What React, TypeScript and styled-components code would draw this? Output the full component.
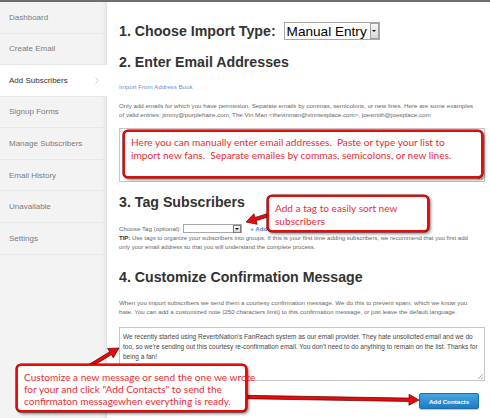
import styled, { createGlobalStyle } from 'styled-components';

const Global = createGlobalStyle`
  html, body { margin: 0; padding: 0; background: #fff; }
  body { font-family: "Liberation Sans", Arial, sans-serif; }
  * { box-sizing: border-box; }
`;

const Page = styled.div`
  position: relative;
  width: 490px;
  height: 418px;
  padding-top: 2px;
  display: flex;
  overflow: hidden;
  &::before {
    content: '';
    position: absolute;
    left: 0; right: 0; top: 0;
    height: 2px;
    background: #6e6e6e;
    z-index: 5;
  }
`;

const Sidebar = styled.nav`
  width: 107px;
  flex-shrink: 0;
  background: #f3f3f3;
  border-right: 1px solid #e3e3e3;
  box-shadow: inset -5px 0 5px -4px rgba(0, 0, 0, 0.07);
`;

const NavItem = styled.div<{ $active?: boolean }>`
  height: 31.57px;
  display: flex;
  align-items: center;
  justify-content: space-between;
  padding: 0 8px 0 9px;
  border-bottom: 1px solid #e8e8e8;
  font-size: 8px;
  color: ${p => (p.$active ? '#333' : '#7b7b7b')};
  background: ${p => (p.$active ? '#fff' : 'transparent')};
  margin-right: ${p => (p.$active ? '-1px' : '0')};
`;

const Main = styled.main`
  flex: 1;
  padding: 20px 5px 0 12px;
  color: #333;
`;

const Row = styled.div`
  display: flex;
  align-items: center;
  gap: 8px;
  height: 18px;
`;

const Heading = styled.h2<{ $mt?: number }>`
  margin: ${p => p.$mt ?? 0}px 0 0;
  font-size: 14.2px;
  line-height: 16px;
  font-weight: bold;
  color: #333;
  white-space: nowrap;
`;

const Select = styled.div<{ $w: number; $h: number; $fs: number }>`
  width: ${p => p.$w}px;
  height: ${p => p.$h}px;
  border: 1px solid #a8a8a8;
  background: #fff;
  display: flex;
  align-items: center;
  justify-content: space-between;
  padding-left: 2px;
  font-size: ${p => p.$fs}px;
  color: #000;
  flex-shrink: 0;
  white-space: nowrap;
`;

const SelectBtn = styled.span<{ $w: number; $h: number; $dark?: boolean }>`
  width: ${p => p.$w}px;
  height: ${p => p.$h}px;
  flex-shrink: 0;
  border: 1px solid ${p => (p.$dark ? '#7d7d7d' : '#a0a0a0')};
  background: linear-gradient(#f8f8f8, #d6d6d6);
  display: flex;
  align-items: center;
  justify-content: center;
  &::after {
    content: '';
    border-left: 2px solid transparent;
    border-right: 2px solid transparent;
    border-top: 2px solid #111;
  }
`;

const Link = styled.a<{ $mt?: number }>`
  display: block;
  margin-top: ${p => p.$mt ?? 0}px;
  font-size: 6.2px;
  line-height: 8px;
  color: #6a8fd4;
  text-decoration: none;
`;

const Para = styled.p<{ $mt?: number; $fs?: number }>`
  margin: ${p => p.$mt ?? 0}px 0 0;
  font-size: ${p => p.$fs ?? 6.2}px;
  line-height: 9px;
  color: #666;
  white-space: nowrap;
  b { color: #333; }
`;

const TextBox = styled.div<{ $mt?: number }>`
  position: relative;
  margin-top: ${p => p.$mt ?? 0}px;
  height: 54px;
  border: 1px solid #c6c6c6;
  background: #fff;
  padding: 4px 3px;
  font-size: 6.5px;
  line-height: 10px;
  color: #444;
  white-space: nowrap;
  &::after {
    content: '';
    position: absolute;
    right: 1px;
    bottom: 1px;
    width: 5px;
    height: 5px;
    background: linear-gradient(135deg, transparent 45%, #aaa 45%, #aaa 55%, transparent 55%, transparent 75%, #aaa 75%, #aaa 85%, transparent 85%);
  }
`;

const TagRow = styled.div`
  margin-top: 14px;
  height: 9px;
  display: flex;
  align-items: center;
  font-size: 6.2px;
  color: #666;
  gap: 2px;
`;

const AddLink = styled.span`
  margin-left: 6px;
  color: #4b7fd0;
  font-weight: bold;
`;

const ButtonRow = styled.div`
  margin-top: 12px;
  display: flex;
  justify-content: flex-end;
  padding-right: 6px;
`;

const Button = styled.button`
  width: 60px;
  height: 16px;
  padding: 0;
  border: 1px solid #1d6eaa;
  border-radius: 2px;
  background: linear-gradient(#45a6e2, #1f7cc2);
  color: #fff;
  font-family: "Liberation Sans", Arial, sans-serif;
  font-weight: bold;
  font-size: 6.2px;
  box-shadow: 0 1px 1px rgba(0, 0, 0, 0.25);
`;

const Callout = styled.div<{ $x: number; $y: number; $w: number; $h: number; $pt: number; $lh: number }>`
  position: absolute;
  left: ${p => p.$x}px;
  top: ${p => p.$y}px;
  width: ${p => p.$w}px;
  height: ${p => p.$h}px;
  padding: ${p => p.$pt}px 0 0 6px;
  background: #fff;
  border: 2.5px solid #e80b0b;
  border-radius: 5px;
  box-shadow: 0 0 0 0.6px #6a0000, 2px 2px 3px rgba(0, 0, 0, 0.45);
  font-family: Lato, "Open Sans", sans-serif;
  font-size: 10.1px;
  line-height: ${p => p.$lh}px;
  color: #ec2b33;
  white-space: pre;
  z-index: 3;
`;

const Overlay = styled.svg`
  position: absolute;
  left: 0;
  top: 0;
  z-index: 2;
  pointer-events: none;
`;

function arrowPoints(x1: number, y1: number, x2: number, y2: number, t = 3.4, hl = 10, hw = 11) {
  const len = Math.hypot(x2 - x1, y2 - y1);
  const dx = (x2 - x1) / len;
  const dy = (y2 - y1) / len;
  const nx = -dy;
  const ny = dx;
  const bx = x2 - dx * hl;
  const by = y2 - dy * hl;
  const pts = [
    [x1 + nx * t / 2, y1 + ny * t / 2],
    [bx + nx * t / 2, by + ny * t / 2],
    [bx + nx * hw / 2, by + ny * hw / 2],
    [x2, y2],
    [bx - nx * hw / 2, by - ny * hw / 2],
    [bx - nx * t / 2, by - ny * t / 2],
    [x1 - nx * t / 2, y1 - ny * t / 2],
  ];
  return pts.map(p => `${p[0].toFixed(1)},${p[1].toFixed(1)}`).join(' ');
}

const nav = ['Dashboard', 'Create Email', 'Add Subscribers', 'Signup Forms', 'Manage Subscribers', 'Email History', 'Unavailable', 'Settings'];

const arrows: [number, number, number, number][] = [
  [272, 214, 246, 222],
  [88, 367, 119, 348],
  [244, 397, 419, 400],
];

export default function App() {
  return (
    <>
      <Global />
      <Page>
        <Sidebar>
          {nav.map(n => (
            <NavItem key={n} $active={n === 'Add Subscribers'}>
              {n}
              {n === 'Add Subscribers' && (
                <svg width="4" height="7" viewBox="0 0 4 7">
                  <polyline points="0.5,0.5 3.3,3.5 0.5,6.5" fill="none" stroke="#c4c4c4" strokeWidth="0.8" />
                </svg>
              )}
            </NavItem>
          ))}
        </Sidebar>
        <Main>
          <Row>
            <Heading>1. Choose Import Type:</Heading>
            <Select $w={96} $h={18} $fs={13.6}>
              Manual Entry
              <SelectBtn $w={9} $h={16} />
            </Select>
          </Row>
          <Heading $mt={14}>2. Enter Email Addresses</Heading>
          <Link $mt={13}>Import From Address Book</Link>
          <Para $mt={9.5}>
            Only add emails for which you have permission. Separate emails by commas, semicolons, or new lines. Here are some examples
            <br />
            of valid entries: jimmy@purplehaze.com, The Vin Man &lt;thevinman@vinniesplace.com&gt;, joesmith@joesplace.com
          </Para>
          <TextBox $mt={9.5} />
          <Heading $mt={12}>3. Tag Subscribers</Heading>
          <TagRow>
            Choose Tag (optional):
            <Select $w={59} $h={9} $fs={6}>
              <span />
              <SelectBtn $w={8} $h={8} $dark />
            </Select>
            <AddLink>+ Add</AddLink>
          </TagRow>
          <Para $mt={0.5} $fs={6}>
            <b>TIP:</b> Use tags to organize your subscribers into groups. If this is your first time adding subscribers, we recommend that you first add
            <br />
            only your email address so that you will understand the complete process.
          </Para>
          <Heading $mt={17.5}>4. Customize Confirmation Message</Heading>
          <Para $mt={12.5}>
            When you import subscribers we send them a courtesy confirmation message. We do this to prevent spam, which we know you
            <br />
            hate. You can add a customized note (250 characters limit) to this confirmation message, or just leave the default language.
          </Para>
          <TextBox $mt={11.5}>
            We recently started using ReverbNation's FanReach system as our email provider. They hate unsolicited email and we do
            <br />
            too, so we're sending out this courtesy re-confirmation email. You don't need to do anything to remain on the list. Thanks for
            <br />
            being a fan!
          </TextBox>
          <ButtonRow>
            <Button>Add Contacts</Button>
          </ButtonRow>
        </Main>

        <Overlay width="490" height="418" viewBox="0 0 490 418">
          {arrows.map((a, i) => (
            <polygon key={i} points={arrowPoints(...a)} fill="#e80b0b" stroke="#5a0000" strokeWidth="0.7" strokeLinejoin="round" />
          ))}
        </Overlay>

        <Callout $x={123} $y={130} $w={360} $h={48} $pt={4} $lh={13}>
          {'Here you can manually enter email addresses.  Paste or type your list to\nimport new fans.  Separate emailes by commas, semicolons, or new lines.'}
        </Callout>
        <Callout $x={267} $y={195} $w={162} $h={37} $pt={5} $lh={13}>
          {'Add a tag to easily sort new\nsubscribers'}
        </Callout>
        <Callout $x={16} $y={364} $w={231} $h={48} $pt={4.5} $lh={12}>
          {'Customize a new message or send the one we wrote\nfor your and click "Add Contacts" to send the\nconfirmaton messagewhen everything is ready.'}
        </Callout>
      </Page>
    </>
  );
}
